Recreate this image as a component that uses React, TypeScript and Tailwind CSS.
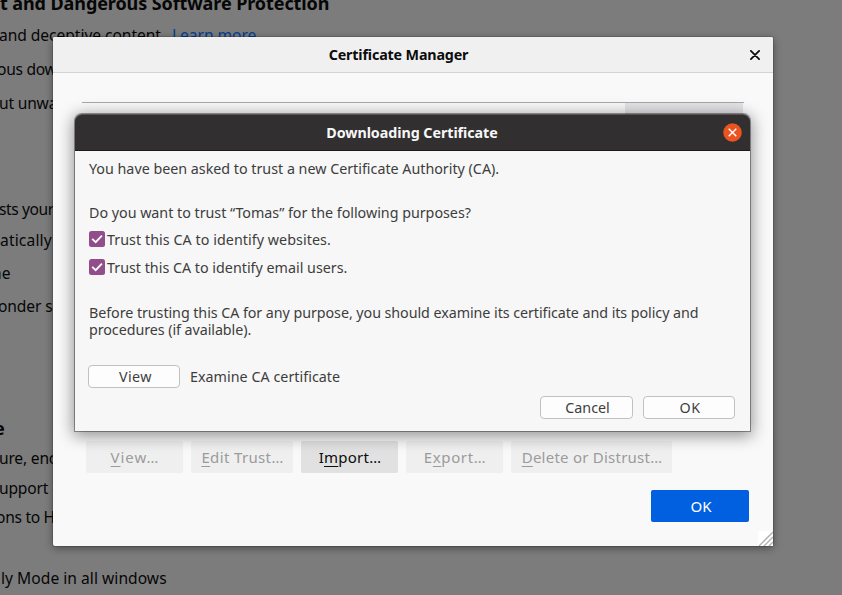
import type { ReactNode } from "react";

function PageLine({ children, className }: { children: ReactNode; className: string }) {
  return <p className={`h-5 leading-5 whitespace-pre text-[15.6px] text-[#060606] ${className}`}>{children}</p>;
}

function SettingsPage() {
  return (
    <div className="-mt-[7px]">
      <h2 className="h-5 leading-5 whitespace-pre text-[18px] font-bold tracking-[-0.09px] text-[#060606]">t and Dangerous Software Protection</h2>
      <PageLine className="mt-[12px] -ml-px flex tracking-[-0.05px]">
        <span className="w-[173px]">and deceptive content.</span>
        <a className="tracking-[-0.05px] text-[#003f94]">Learn more</a>
      </PageLine>
      <PageLine className="mt-[14px] -ml-[3px] tracking-[-0.3px]">ous download</PageLine>
      <PageLine className="mt-[14px] -ml-px tracking-[-0.2px]">ut unwanted</PageLine>
      <PageLine className="mt-[86px] -ml-px tracking-[-0.4px]">sts your</PageLine>
      <PageLine className="mt-[11px] tracking-[0.15px]">atically</PageLine>
      <PageLine className="mt-[13px] -ml-[8px]">ne</PageLine>
      <PageLine className="mt-[13px] -ml-[2px] tracking-[-0.1px]">onder servers</PageLine>
      <p className="mt-[102px] -ml-[6px] h-5 text-[18px] leading-5 font-bold text-[#060606]">e</p>
      <PageLine className="mt-[10px] -ml-px tracking-[-0.2px]">ure, encrypted</PageLine>
      <PageLine className="mt-[10px] -ml-px tracking-[-0.2px]">upport</PageLine>
      <PageLine className="mt-[9px] -ml-[4px] tracking-[-0.3px]">ons to HTTPS</PageLine>
      <PageLine className="mt-[41px] ml-px tracking-[0.03px]">ly Mode in all windows</PageLine>
    </div>
  );
}

function ManagerButton({ before = "", accessKey, after, className }: { before?: string; accessKey: string; after: string; className: string }) {
  return (
    <button className={`h-8 rounded-[2px] pl-px text-center text-[15px] leading-[32px] whitespace-nowrap ${className}`}>
      {before}
      <span className="underline decoration-1 underline-offset-[3px]">{accessKey}</span>
      {after}
    </button>
  );
}

function CertificateManager() {
  return (
    <section className="absolute top-[37px] left-[53px] flex h-[509px] w-[720px] flex-col rounded-[2px] bg-[#f9f9f9] shadow-[0_0_0_1px_rgba(0,0,0,0.12),0_2px_8px_rgba(0,0,0,0.42)]">
      <header className="relative flex h-9 items-center justify-center rounded-t-[2px] border-b border-[#d3d3d5] bg-[#f0f0f0]">
        <h1 className="pr-[29px] text-[14.3px] font-bold tracking-[-0.16px] text-[#0c0c0d]">Certificate Manager</h1>
        <svg className="absolute top-[13px] right-[13px] size-[10px]" viewBox="0 0 10 10" stroke="#0c0c0d" strokeWidth="1.8" strokeLinecap="round">
          <path d="M.9.9 9.1 9.1M9.1.9.9 9.1" />
        </svg>
      </header>
      <div className="mx-[29px] mt-[29px] flex h-[300px] w-[662px] justify-end border-t border-[#a9a9ad] pr-px">
        <div className="w-[118px] bg-[#e4e4e7]" />
      </div>
      <div className="mt-[39px] flex gap-2 pl-[33px]">
        <ManagerButton accessKey="V" after="iew…" className="w-[97px] bg-[#efefef] tracking-[0.95px] text-[#9b9b9c]" />
        <ManagerButton accessKey="E" after="dit Trust…" className="w-[102px] bg-[#efefef] tracking-[0.36px] text-[#9b9b9c]" />
        <ManagerButton before="I" accessKey="m" after="port…" className="w-[97px] bg-[#e1e1e1] tracking-[0.25px] text-[#0c0c0d]" />
        <ManagerButton before="E" accessKey="x" after="port…" className="w-[97px] bg-[#efefef] tracking-[0.6px] text-[#9b9b9c]" />
        <ManagerButton accessKey="D" after="elete or Distrust…" className="w-[161px] bg-[#efefef] tracking-[0.24px] text-[#9b9b9c]" />
      </div>
      <button className="mt-[17px] mr-6 h-8 w-[98px] self-end rounded-[2px] bg-[#0060df] pl-[2px] text-[15px] leading-[32px] text-white">OK</button>
      <svg className="absolute right-0 bottom-0 size-[15px] bg-white" viewBox="0 0 15 15" stroke="#b1b1b1" strokeWidth="1.4">
        <path d="M1 15 15 1M6 15 15 6M11 15 15 11" />
      </svg>
    </section>
  );
}

function TrustOption({ label, className }: { label: string; className: string }) {
  return (
    <div className={`flex h-5 items-start ${className}`}>
      <svg className="mt-px mr-[2px] size-4" viewBox="0 0 16 16" fill="none">
        <rect width="16" height="16" rx="2.5" fill="#924d8b" />
        <path d="m3.2 7.8 3.5 3.4 6.2-6.6" stroke="#fff" strokeWidth="1.8" />
      </svg>
      <span className="leading-5 whitespace-nowrap">{label}</span>
    </div>
  );
}

function DialogButton({ children, className }: { children: ReactNode; className: string }) {
  return <button className={`h-[23px] rounded-[4px] border border-[#c1c1c1] bg-[#fdfdfd] text-center leading-[22px] ${className}`}>{children}</button>;
}

function DownloadingDialog() {
  return (
    <section className="absolute top-[114px] left-[75px] h-[317px] w-[675px] rounded-t-[7px] bg-[#f7f7f7] shadow-[0_0_0_1px_rgba(0,0,0,0.36),0_3px_16px_2px_rgba(0,0,0,0.42)]">
      <header className="relative flex h-[37px] items-center justify-center rounded-t-[7px] border-t border-b border-t-[#555354] border-b-[#1c191a] bg-[#322f30]">
        <h2 className="pt-px pr-px text-[14.3px] font-bold tracking-[-0.06px] text-[#f7f7f7]">Downloading Certificate</h2>
        <svg className="absolute top-[7.5px] right-[8.5px] size-[19px]" viewBox="0 0 19 19">
          <circle cx="9.5" cy="9.5" r="9.3" fill="#e95420" />
          <path d="m5.7 5.7 7.6 7.6m0-7.6-7.6 7.6" stroke="#fff" strokeWidth="1.4" />
        </svg>
      </header>
      <div className="pt-2 pl-[14px] text-[14.3px] text-[#3d3d3d]">
        <p className="h-5 leading-5 tracking-[-0.01px]">You have been asked to trust a new Certificate Authority (CA).</p>
        <p className="mt-6 h-5 leading-5 tracking-[-0.02px]">Do you want to trust “Tomas” for the following purposes?</p>
        <TrustOption className="mt-[7px] tracking-[0.05px]" label="Trust this CA to identify websites." />
        <TrustOption className="mt-2" label="Trust this CA to identify email users." />
        <p className="mt-[26px] leading-[17px] whitespace-nowrap tracking-[-0.063px]">
          Before trusting this CA for any purpose, you should examine its certificate and its policy and
          <br />
          procedures (if available).
        </p>
        <div className="mt-[27px] -ml-px flex items-center gap-[10px]">
          <DialogButton className="w-[92px] pl-[3px] tracking-[0.4px]">View</DialogButton>
          <span className="leading-[23px] tracking-[0.03px]">Examine CA certificate</span>
        </div>
      </div>
      <footer className="mt-2 flex justify-end gap-[10px] pr-[15px] text-[14.3px] text-[#3d3d3d]">
        <DialogButton className="w-[93px] pl-[2px]">Cancel</DialogButton>
        <DialogButton className="w-[92px] pl-[2px] tracking-[0.5px]">OK</DialogButton>
      </footer>
    </section>
  );
}

export default function App() {
  return (
    <main className="relative flex h-[595px] w-[842px] flex-col overflow-hidden bg-[#7c7c7c] font-['Noto_Sans',sans-serif]">
      <SettingsPage />
      <CertificateManager />
      <DownloadingDialog />
    </main>
  );
}
